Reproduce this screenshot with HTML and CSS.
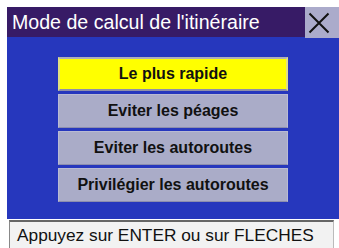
FILE: index.html
```html
<!DOCTYPE html>
<html>
<head>
<meta charset="utf-8">
<link rel="stylesheet" href="styles.css">
</head>
<body>
<div class="screen">
  <div class="titlebar">
    <div class="title">Mode de calcul de l'itinéraire</div>
    <div class="close">
      <svg width="22" height="22" viewBox="0 0 22 22"><path d="M1.5 1.5 L20.5 20.5 M20.5 1.5 L1.5 20.5" stroke="#111" stroke-width="2" fill="none"/></svg>
    </div>
  </div>
  <div class="panel">
    <div class="btn selected">Le plus rapide</div>
    <div class="btn">Eviter les péages</div>
    <div class="btn">Eviter les autoroutes</div>
    <div class="btn">Privilégier les autoroutes</div>
  </div>
  <div class="status">Appuyez sur ENTER ou sur FLECHES</div>
</div>
</body>
</html>
```
FILE: styles.css
```css
html, body {
  margin: 0;
  padding: 0;
  background: #ffffff;
}
body {
  font-family: "Liberation Sans", Arial, sans-serif;
  overflow: hidden;
}
.screen {
  margin: 7px 0 0 7px;
  width: 332px;
}
.titlebar {
  display: flex;
  height: 30px;
}
.title {
  flex: 1;
  background: #371b66;
  color: #ffffff;
  font-size: 19.6px;
  line-height: 30px;
  padding-left: 5px;
  white-space: nowrap;
}
.close {
  width: 34px;
  height: 31px;
  background: #ababcb;
  display: flex;
  align-items: center;
  justify-content: center;
  padding-right: 6px;
  box-sizing: border-box;
  position: relative;
  z-index: 1;
}
.panel {
  background: #2637bd;
  padding: 20px 0 17px;
  display: flex;
  flex-direction: column;
  align-items: center;
  gap: 3px;
}
.btn {
  width: 230px;
  height: 34px;
  box-sizing: border-box;
  background: #aaacc8;
  border: 1px solid #b9bbd3;
  border-bottom-color: #8c8eae;
  color: #111111;
  font-weight: bold;
  font-size: 16px;
  line-height: 32px;
  text-align: center;
  white-space: nowrap;
}
.btn.selected {
  background: #ffff00;
  border: 2px solid #c8c8a0;
  border-color: #b0b0b8 #e0e080 #9090a8 #e0e080;
  line-height: 30px;
}
.status {
  margin: 1px 5px 0 2px;
  height: 40px;
  box-sizing: border-box;
  background: #f2f2f2;
  border-top: 2px solid #666666;
  border-left: 1px solid #888888;
  border-right: 1px solid #bbbbbb;
  color: #111111;
  font-size: 17.3px;
  line-height: 26px;
  padding-left: 7px;
  white-space: nowrap;
}
```
